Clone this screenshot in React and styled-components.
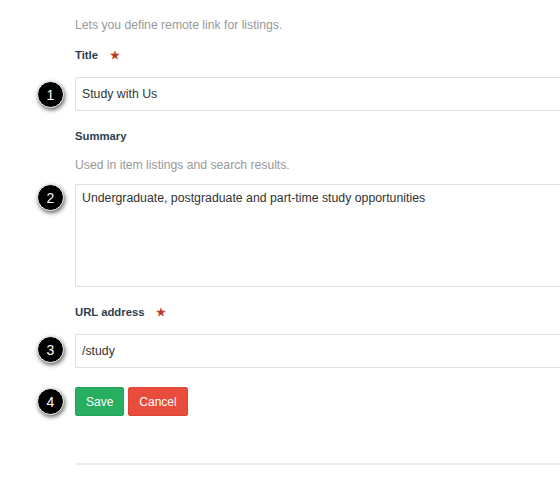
import React from "react";
import styled, { createGlobalStyle } from "styled-components";

const Global = createGlobalStyle`
  html, body { margin: 0; padding: 0; background: #fff; overflow: hidden; }
  body { font-family: "Liberation Sans", Arial, sans-serif; }
`;

const Page = styled.div`
  width: 560px;
  height: 487px;
  overflow: hidden;
  background: #fff;
`;

const Form = styled.form`
  width: 640px;
  padding: 17px 0 0 75px;
  display: flex;
  flex-direction: column;
`;

const Description = styled.p`
  margin: 0 0 ${(p) => p.$mb || 14}px;
  font-size: 12.2px;
  line-height: 16px;
  color: #999;
`;

const Label = styled.label`
  display: flex;
  align-items: center;
  gap: 12px;
  margin: 0 0 ${(p) => p.$mb}px;
  font-size: 11.3px;
  line-height: 16px;
  font-weight: bold;
  color: #2c3e50;
`;

const Star = styled.span`
  color: #c0392b;
  font-size: 11px;
  line-height: 16px;
`;

const Field = styled.div`
  position: relative;
  margin-bottom: ${(p) => p.$mb}px;
`;

const TextInput = styled.div`
  box-sizing: border-box;
  height: 34px;
  display: flex;
  align-items: center;
  padding: 0 6px;
  border: 1px solid #dedede;
  border-radius: 2px;
  font-size: 12.3px;
  color: #333;
`;

const TextArea = styled.div`
  box-sizing: border-box;
  height: 103px;
  padding: 5px 6px;
  border: 1px solid #dedede;
  border-radius: 2px;
  font-size: 12.3px;
  line-height: 16px;
  color: #333;
`;

const Badge = styled.span`
  position: absolute;
  left: -38px;
  top: ${(p) => p.$top}px;
  width: 25px;
  height: 25px;
  border-radius: 50%;
  background: #000;
  border: 1px solid #fff;
  box-shadow: 1px 2px 4px rgba(0, 0, 0, 0.6);
  color: #fff;
  font-size: 14px;
  display: flex;
  align-items: center;
  justify-content: center;
`;

const Actions = styled.div`
  position: relative;
  display: flex;
  gap: 4px;
  margin-bottom: 47px;
`;

const Button = styled.button`
  box-sizing: border-box;
  height: 29px;
  padding: 0 10px;
  border: 1px solid ${(p) => (p.$variant === "save" ? "#22a45a" : "#dd4535")};
  background: ${(p) => (p.$variant === "save" ? "#27ae60" : "#e74c3c")};
  color: #fff;
  font-family: "Liberation Sans", Arial, sans-serif;
  font-size: 12px;
  border-radius: 2px;
`;

const Divider = styled.hr`
  margin: 0;
  border: none;
  border-top: 2px solid #eee;
`;

export default function App() {
  return (
    <Page>
      <Global />
      <Form>
        <Description $mb={14}>Lets you define remote link for listings.</Description>
        <Label $mb={14}>
          Title <Star>★</Star>
        </Label>
        <Field $mb={17}>
          <Badge $top={4}>1</Badge>
          <TextInput>Study with Us</TextInput>
        </Field>
        <Label $mb={13}>Summary</Label>
        <Description $mb={11}>Used in item listings and search results.</Description>
        <Field $mb={17}>
          <Badge $top={0}>2</Badge>
          <TextArea>Undergraduate, postgraduate and part-time study opportunities</TextArea>
        </Field>
        <Label $mb={14}>
          URL address <Star>★</Star>
        </Label>
        <Field $mb={19}>
          <Badge $top={2}>3</Badge>
          <TextInput>/study</TextInput>
        </Field>
        <Actions>
          <Badge $top={1}>4</Badge>
          <Button type="button" $variant="save">Save</Button>
          <Button type="button" $variant="cancel">Cancel</Button>
        </Actions>
        <Divider />
      </Form>
    </Page>
  );
}
